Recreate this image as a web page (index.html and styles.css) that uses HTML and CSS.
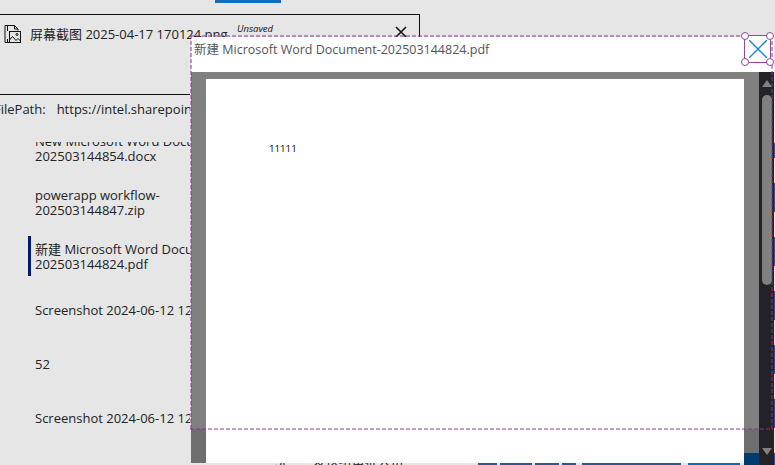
FILE: index.html
```html
<!DOCTYPE html>
<html lang="en">
<head>
    <meta charset="UTF-8">
    <meta name="viewport" content="width=device-width, initial-scale=1.0">
    <title>File Viewer</title>
    <link rel="stylesheet" href="styles.css">
</head>
<body>
    <div class="tab-strip"><span class="tab-active"></span></div>

    <div class="file-card">
        <div class="file-head">
            <svg class="file-icon" width="17" height="18" viewBox="0 0 17 18" fill="none" stroke="#111" stroke-width="1">
                <path d="M3.500 6V.5h7l3.500 3.500v1.500M3.500 14v3.500h1M1 .5h9.500M1 .5v17h5M10.500 .5V4H14"/>
                <rect x="5.500" y="6.500" width="11" height="11"/>
                <path d="M5.500 15l3-3.500 3.500 4 2-2 2.500 2.500"/>
                <circle cx="13" cy="9.500" r="1"/>
            </svg>
            <span class="file-name">屏幕截图 2025-04-17 170124.png</span>
            <span class="unsaved">Unsaved</span>
            <svg class="file-close" width="12" height="12" viewBox="0 0 12 12" stroke="#111" stroke-width="1.600">
                <path d="M1 1l10 10M11 1L1 11"/>
            </svg>
        </div>
    </div>

    <div class="file-path"><span>FilePath:</span><span>https://intel.sharepoint.com/sites/powerapps</span></div>

    <ul class="file-list">
        <li class="file-row"><span>New Microsoft Word Document-<br>202503144854.docx</span></li>
        <li class="file-row"><span>powerapp workflow-<br>202503144847.zip</span></li>
        <li class="file-row selected"><span>新建 Microsoft Word Document-<br>202503144824.pdf</span></li>
        <li class="file-row single"><span>Screenshot 2024-06-12 125530.png</span></li>
        <li class="file-row single"><span>52</span></li>
        <li class="file-row single"><span>Screenshot 2024-06-12 125531.png</span></li>
    </ul>

    <span class="edge-stripes"></span>

    <div class="bottom-peek">
        <span class="peek-text">Si 发送给审批人员</span>
        <span class="peek-blue w1"></span>
        <span class="peek-blue w2"></span>
        <span class="peek-blue w3"></span>
        <span class="peek-blue w4"></span>
        <span class="peek-blue w5"></span>
        <span class="peek-bright"></span>
    </div>

    <div class="viewer">
        <div class="viewer-title">
            <span>新建 Microsoft Word Document-202503144824.pdf</span>
        </div>
        <div class="viewer-body">
            <div class="pdf-pane">
                <div class="pdf-page">11111</div>
            </div>
            <div class="scrollbar">
                <span class="arrow-up"></span>
                <span class="thumb"></span>
                <span class="arrow-down"></span>
            </div>
        </div>
    </div>
    <span class="dark-block"></span>

    <!-- selection outline + close button -->
    <div class="select-box"></div>
    <div class="close-box">
        <svg width="18" height="18" viewBox="0 0 18 18" stroke="#1488d8" stroke-width="1.400">
            <path d="M0 0l18 18M18 0L0 18"/>
        </svg>
        <i class="handle h-tl"></i><i class="handle h-tr"></i><i class="handle h-bl"></i><i class="handle h-br"></i>
    </div>
</body>
</html>
```

FILE: styles.css
```css
* { box-sizing: border-box; }
html, body { margin: 0; height: 100%; }
body { width: 775px; height: 465px; overflow: hidden; position: relative; background: #e6e6e6; font-family: "Open Sans", "Noto Sans CJK SC", sans-serif; font-size: 13px; color: #222; }

.tab-strip { height: 14px; padding-left: 215px; }
.tab-active { display: block; width: 66px; height: 3px; background: #106ebe; }

.file-card { width: 420px; height: 81px; border-top: 1px solid #111; border-right: 1px solid #111; }
.file-head { display: flex; align-items: center; height: 30px; padding: 7px 0 0 4px; position: relative; }
.file-icon { margin-right: 9px; }
.file-name { white-space: nowrap; }
.unsaved { position: absolute; left: 237px; top: 7px; font-size: 9.500px; font-style: italic; color: #111; }
.file-close { position: absolute; left: 395px; top: 11px; }

.file-path { width: 190px; height: 48px; margin-top: -1px; border-top: 1px solid #111; padding: 5px 0 0 0; display: flex; gap: 11px; white-space: nowrap; overflow: hidden; }
.file-path span:first-child { margin-left: -6px; }

.file-list { list-style: none; margin: 0; padding: 0; width: 190px; height: 323px; overflow: hidden; }
.file-row { height: 54px; padding-left: 35px; line-height: 15px; white-space: nowrap; display: flex; align-items: center; position: relative; }
.file-row:first-child { margin-top: -20px; }
.single { padding-bottom: 2px; }
.selected::before { content: ""; position: absolute; left: 28px; top: 6px; width: 3px; height: 40px; background: #001a72; }

.edge-stripes { position: absolute; left: 774px; top: 143px; width: 1px; height: 322px; background: repeating-linear-gradient(to bottom, #0063b1 0 15px, transparent 15px 40px, #0063b1 40px 54px); }

.bottom-peek { position: absolute; left: 0; top: 463px; width: 775px; height: 2px; overflow: hidden; }
.peek-blue, .peek-bright { position: absolute; top: 0; height: 2px; background: #2f5597; }
.peek-text { position: absolute; left: 275px; top: -12px; word-spacing: 24px; white-space: nowrap; }
.w1 { left: 478px; width: 19px; }
.w2 { left: 500px; width: 32px; }
.w3 { left: 535px; width: 24px; }
.w4 { left: 562px; width: 14px; }
.w5 { left: 582px; width: 99px; }
.peek-bright { left: 688px; width: 52px; background: #0070c0; }

.viewer { position: absolute; left: 191px; top: 37px; width: 583px; height: 428px; display: flex; flex-direction: column; }
.viewer-title { height: 35px; background: #fff; padding: 2px 0 0 3px; color: #555; font-size: 12.500px; }
.viewer-body { flex: 1; display: flex; min-height: 0; }
.pdf-pane { flex: 1; margin-bottom: 2px; background: linear-gradient(to bottom, #808080 0 357px, #6e6e6e 357px); padding: 7px 15px 0 15px; }
.pdf-page { background: #fff; height: 100%; padding: 63px 0 0 63px; font-size: 9.700px; color: #000; }
.scrollbar { width: 15px; background: #222228; display: flex; flex-direction: column; align-items: center; }
.arrow-up { width: 0; height: 0; margin-top: 8px; border: 5px solid transparent; border-top: 0; border-bottom: 7px solid #808080; }
.thumb { width: 10px; height: 190px; margin-top: 8px; border-radius: 5px; background: #808080; }
.arrow-down { width: 0; height: 0; margin-top: auto; margin-bottom: 10px; border: 5px solid transparent; border-bottom: 0; border-top: 7px solid #808080; }
.dark-block { position: absolute; left: 744px; top: 453px; width: 15px; height: 12px; background: #003a70; }

.select-box {
    position: absolute; left: 190px; top: 35px; width: 583px; height: 395px; pointer-events: none;
    --dash: rgba(140, 50, 150, 0.5);
    background:
        repeating-linear-gradient(to right, var(--dash) 0 4px, transparent 4px 6px) top / 100% 2px no-repeat,
        repeating-linear-gradient(to right, var(--dash) 0 4px, transparent 4px 6px) bottom / 100% 2px no-repeat,
        repeating-linear-gradient(to bottom, var(--dash) 0 4px, transparent 4px 6px) left / 2px 100% no-repeat,
        repeating-linear-gradient(to bottom, var(--dash) 0 4px, transparent 4px 6px) right / 2px 100% no-repeat;
}

.close-box { position: absolute; left: 744px; top: 35px; width: 27px; height: 28px; border: 1px solid #8f4a9c; display: flex; align-items: center; justify-content: center; background: #fff; }
.handle { position: absolute; width: 8px; height: 8px; border-radius: 50%; border: 1px solid #8f4a9c; background: #fff; }
.h-tl { left: -4px; top: -4px; }
.h-tr { right: -4px; top: -4px; }
.h-bl { left: -4px; bottom: -4px; }
.h-br { right: -4px; bottom: -4px; }
```
